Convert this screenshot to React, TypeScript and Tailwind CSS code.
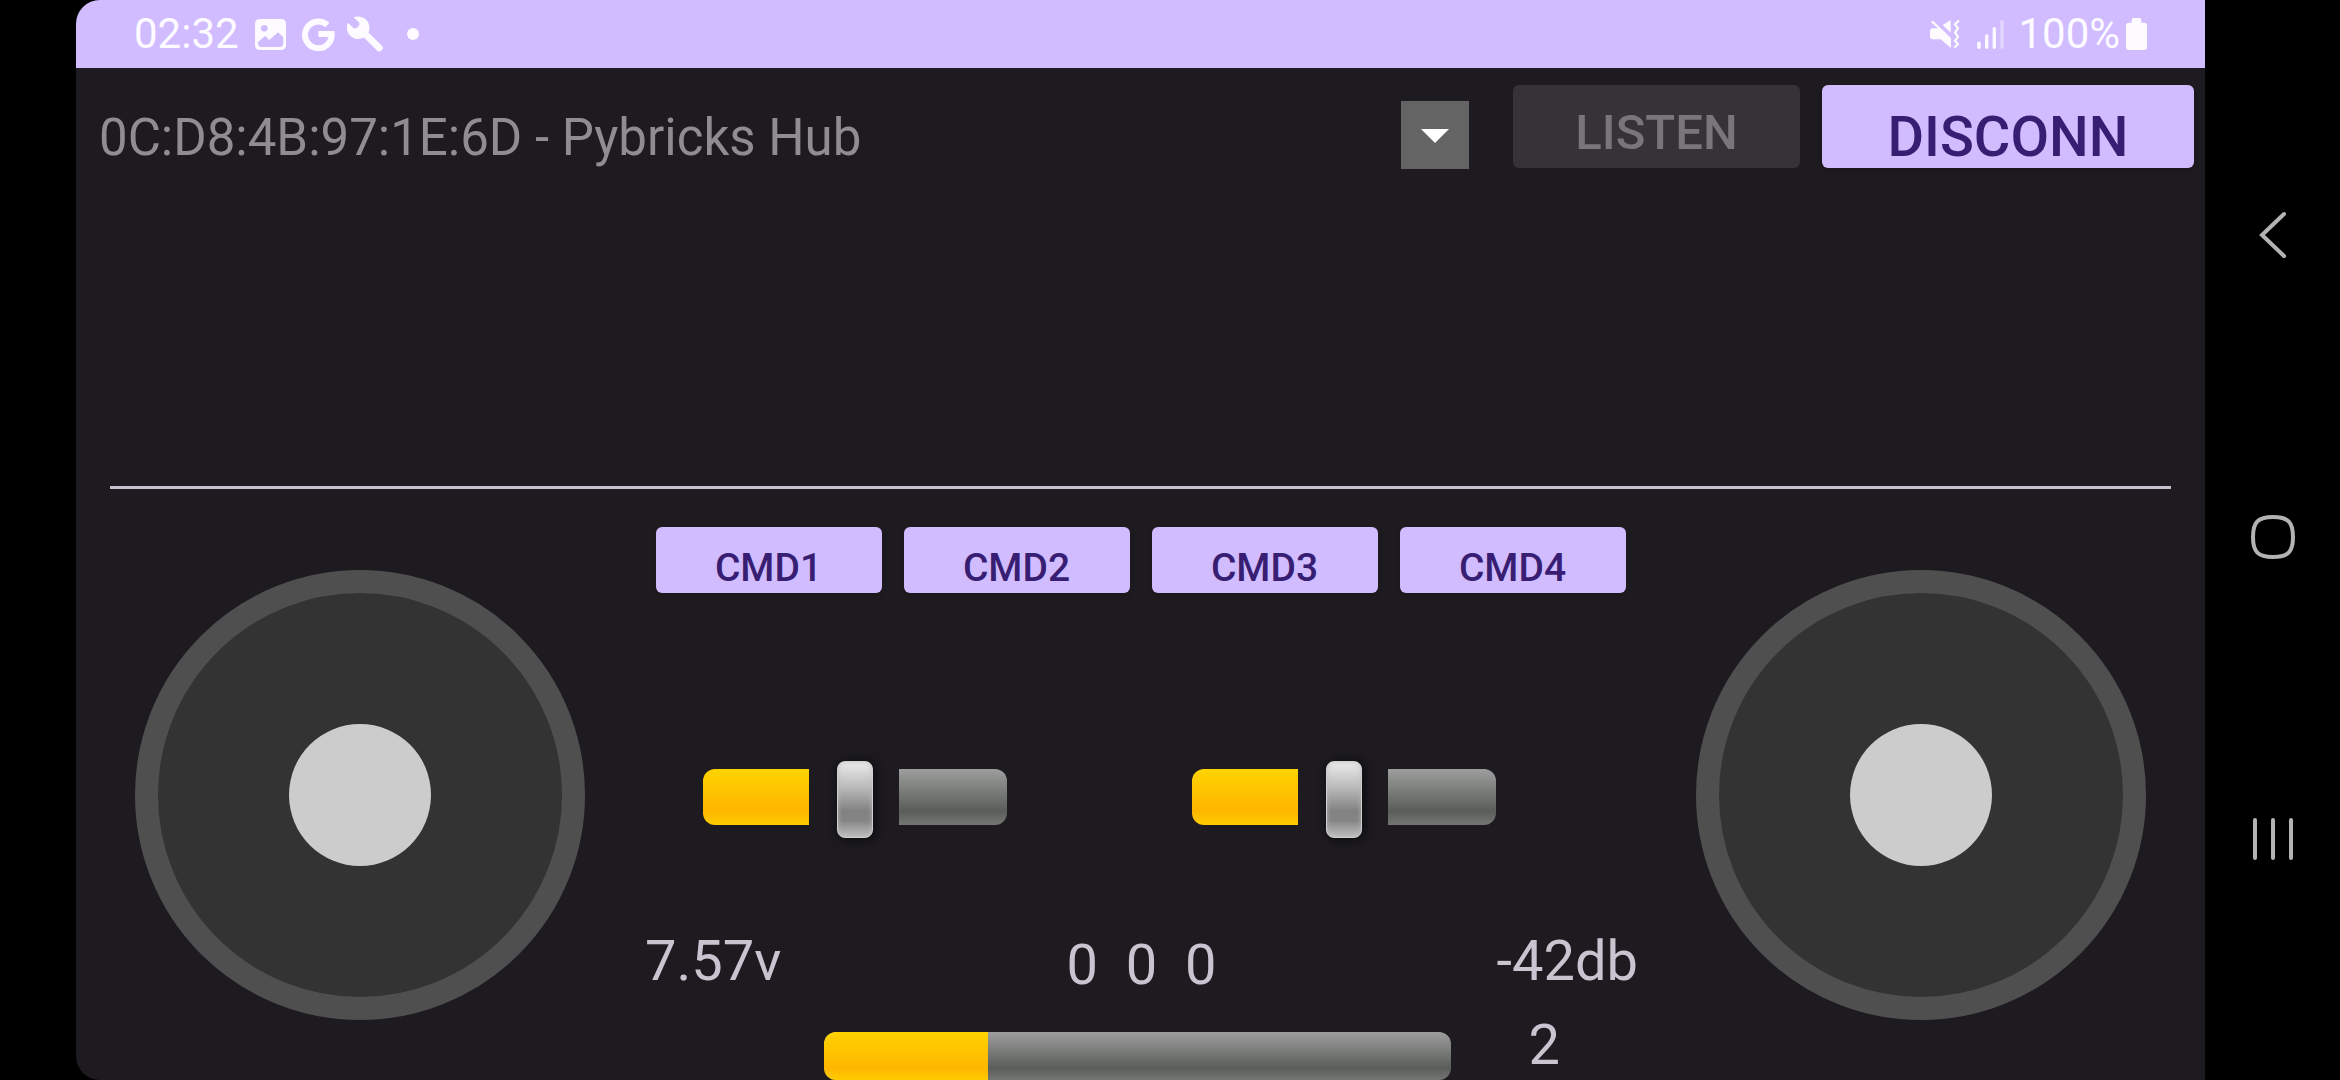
import React from "react";

const YELLOW = "bg-[linear-gradient(to_bottom,#ffd300,#ffb600_75%,#ffcb00)]";
const GREY = "bg-[linear-gradient(to_bottom,#9d9e9d,#5a5d5a_75%,#747674)]";

function PictureIcon() {
  return (
    <svg viewBox="0 0 93 93" className="h-[31px] w-[31px]" aria-hidden="true">
      <path
        fill="currentColor"
        fillRule="evenodd"
        d="M15 0H78Q93 0 93 15V78Q93 93 78 93H15Q0 93 0 78V15Q0 0 15 0ZM28 18A10 10 0 1 0 28 38A10 10 0 1 0 28 18ZM9 69L30 51L43 63L69 40L85 55V73Q85 84 74 84H20Q9 84 9 73Z"
      />
    </svg>
  );
}

function GoogleIcon() {
  return (
    <svg viewBox="0 0 99 99" className="h-[33px] w-[33px]" aria-hidden="true">
      <path
        fill="none"
        stroke="currentColor"
        strokeWidth="18"
        d="M76 21A40 40 0 1 0 89 48H49"
      />
    </svg>
  );
}

function WrenchIcon() {
  return (
    <svg viewBox="0 0 108 108" className="h-9 w-9" aria-hidden="true">
      <path fill="currentColor" d="M20 4A34 34 0 1 1 3 20L20 37H28L37 28V20Z" />
      <path stroke="currentColor" strokeWidth="20" strokeLinecap="round" d="M50 50L97 96" />
    </svg>
  );
}

function MuteVibrateIcon() {
  return (
    <svg viewBox="0 0 90 90" className="h-[30px] w-[30px]" aria-hidden="true">
      <path fill="currentColor" d="M62 3V41L38 18Z" />
      <path
        fill="currentColor"
        d="M8 28H24L3 10Q4 5 9 5L63 57V87L32 61H8Q0 60 0 52V37Q0 29 8 28Z"
      />
      <path
        fill="none"
        stroke="currentColor"
        strokeWidth="7"
        strokeLinejoin="round"
        strokeLinecap="round"
        d="M85 6L75 16L84 28L75 41L84 53L75 66L84 75L75 84"
      />
    </svg>
  );
}

function SignalIcon() {
  return (
    <svg viewBox="0 0 81 88" className="h-[29px] w-[27px]" fill="currentColor" aria-hidden="true">
      <rect x="0" y="65" width="11" height="23" rx="5" />
      <rect x="24" y="43" width="10" height="45" rx="5" />
      <rect x="47" y="21" width="10" height="67" rx="5" />
      <rect x="70" y="0" width="11" height="88" rx="5" opacity="0.4" />
    </svg>
  );
}

function BatteryIcon() {
  return (
    <svg viewBox="0 0 63 96" className="h-8 w-[21px]" fill="currentColor" aria-hidden="true">
      <rect x="17" y="0" width="29" height="30" rx="5" />
      <rect x="0" y="14" width="63" height="82" rx="9" />
    </svg>
  );
}

function StatusBar() {
  return (
    <header className="flex h-[68px] items-center justify-between bg-[#d0bcff] px-[58px] text-[42px] leading-[48px] text-[#fdfbff]">
      <div className="flex items-center">
        <time>02:32</time>
        <span className="ml-4">
          <PictureIcon />
        </span>
        <span className="ml-4">
          <GoogleIcon />
        </span>
        <span className="ml-3">
          <WrenchIcon />
        </span>
        <span className="ml-6 h-3 w-3 rounded-full bg-current" />
      </div>
      <div className="flex items-center">
        <MuteVibrateIcon />
        <span className="ml-[17px]">
          <SignalIcon />
        </span>
        <span className="ml-3.5">100%</span>
        <span className="ml-1.5">
          <BatteryIcon />
        </span>
      </div>
    </header>
  );
}

function DeviceRow() {
  return (
    <div className="flex items-start pt-[17px] pr-[11px]">
      <div className="relative mt-4 mr-11 h-[68px] min-w-0 flex-1">
        <select
          aria-label="Device"
          disabled
          className="h-full w-full appearance-none truncate bg-transparent pt-1.5 pr-20 pl-[23px] text-[51px] leading-[62px] text-[#8f8d91] opacity-100"
        >
          <option>0C:D8:4B:97:1E:6D - Pybricks Hub</option>
        </select>
        <span className="pointer-events-none absolute inset-y-0 right-0 flex w-[68px] items-center justify-center bg-[#646464]">
          <svg viewBox="0 0 28 14" className="mt-0.5 h-3.5 w-7" aria-hidden="true">
            <path fill="#fff" d="M0 0H28L14 14Z" />
          </svg>
        </span>
      </div>
      <button
        disabled
        className="mr-[22px] h-[83px] w-[287px] rounded-md bg-[#353337] pt-3 text-[49px] leading-[60px] font-medium text-[#79767a]"
      >
        LISTEN
      </button>
      <button className="h-[83px] w-[372px] rounded-md bg-[#d0bcff] pt-5 text-[56px] leading-[60px] font-medium text-[#381e72] shadow-md">
        DISCONN
      </button>
    </div>
  );
}

function Joystick({ label }: { label: string }) {
  return (
    <div
      role="group"
      aria-label={label}
      className="mt-[81px] flex h-[450px] w-[450px] shrink-0 items-center justify-center rounded-full border-[23px] border-[#4f4f4f] bg-[#333333]"
    >
      <button aria-label={label + " handle"} className="h-[142px] w-[142px] rounded-full bg-[#cccccc]" />
    </div>
  );
}

function SplitSlider({ label }: { label: string }) {
  return (
    <div className="relative flex h-14 w-[304px] justify-between">
      <span className={"w-[106px] rounded-l-xl " + YELLOW} />
      <span className={"w-[108px] rounded-r-xl " + GREY} />
      <input
        type="range"
        aria-label={label}
        defaultValue={50}
        className="absolute inset-x-0 top-0.5 h-full w-full appearance-none bg-transparent [&::-webkit-slider-thumb]:h-[77px] [&::-webkit-slider-thumb]:w-9 [&::-webkit-slider-thumb]:appearance-none [&::-webkit-slider-thumb]:rounded-lg [&::-webkit-slider-thumb]:border [&::-webkit-slider-thumb]:border-[#d0d0d0] [&::-webkit-slider-thumb]:bg-[linear-gradient(to_bottom,#ececec,#b8b8b8_35%,#828282_65%,#848484_78%,#c0c0c0)] [&::-webkit-slider-thumb]:shadow-[2px_1px_8px_2px_rgba(0,0,0,0.5),inset_0_0_5px_rgba(190,190,190,0.8)]"
      />
    </div>
  );
}

function Controls() {
  return (
    <div className="min-w-0 flex-1">
      <div className="mt-[38px] flex justify-center gap-[22px]">
        {["CMD1", "CMD2", "CMD3", "CMD4"].map((name) => (
          <button
            key={name}
            className="h-[66px] w-[226px] rounded-md bg-[#d0bcff] pt-4 text-[39px] leading-[48px] font-medium text-[#381e72] shadow-md"
          >
            {name}
          </button>
        ))}
      </div>
      <div className="mt-44 flex justify-center gap-[185px] pr-[82px]">
        <SplitSlider label="Left trim" />
        <SplitSlider label="Right trim" />
      </div>
      <div className="mt-[104px] grid grid-cols-[1fr_auto_1fr] pr-[58px] pl-[60px] text-[56px] leading-[64px] text-[#cac4d0]">
        <span>7.57v</span>
        <span className="pt-1 whitespace-pre">0  0  0</span>
        <span className="text-right">-42db</span>
      </div>
      <div className="mt-4 flex h-[67px] items-end pr-[136px] pl-[239px]">
        <div
          role="progressbar"
          aria-label="Level"
          aria-valuenow={26}
          className={"h-12 min-w-0 flex-1 overflow-hidden rounded-xl " + GREY}
        >
          <div className={"h-full " + YELLOW} style={{ width: "26.2%" }} />
        </div>
        <span className="ml-[78px] self-start text-[56px] leading-[64px] text-[#cac4d0]">2</span>
      </div>
    </div>
  );
}

function NavigationBar() {
  const button = "flex h-[302px] w-full items-center justify-center";
  return (
    <nav className="flex w-[135px] shrink-0 flex-col justify-center pb-1.5 text-[#b3b3b3]">
      <button className={button} aria-label="Back">
        <svg viewBox="0 0 28 48" className="h-12 w-7" fill="none" stroke="currentColor" strokeWidth="4" strokeLinecap="round" aria-hidden="true">
          <path d="M25 3L3 24L25 45" />
        </svg>
      </button>
      <button className={button} aria-label="Home">
        <svg viewBox="0 0 44 44" className="h-11 w-11" fill="none" stroke="currentColor" strokeWidth="4" aria-hidden="true">
          <path d="M22 2C37 2 42 7 42 22S37 42 22 42S2 37 2 22S7 2 22 2Z" />
        </svg>
      </button>
      <button className={button} aria-label="Recent apps">
        <svg viewBox="0 0 40 44" className="h-11 w-10" fill="none" stroke="currentColor" strokeWidth="4" strokeLinecap="round" aria-hidden="true">
          <path d="M2 3V41M20 3V41M38 3V41" />
        </svg>
      </button>
    </nav>
  );
}

export default function App() {
  return (
    <div className="flex min-h-screen bg-black pl-[76px] font-[Roboto,sans-serif]">
      <main className="flex min-w-0 flex-1 flex-col overflow-hidden rounded-l-3xl bg-[#1d1b20]">
        <StatusBar />
        <DeviceRow />
        <textarea
          aria-label="Log"
          className="mx-[34px] min-h-[200px] flex-1 resize-none border-b-3 border-[#c6c1cc] bg-transparent text-[40px] text-[#cac4d0] outline-none"
        />
        <section className="flex items-start px-[59px]">
          <Joystick label="Left joystick" />
          <Controls />
          <Joystick label="Right joystick" />
        </section>
      </main>
      <NavigationBar />
    </div>
  );
}
